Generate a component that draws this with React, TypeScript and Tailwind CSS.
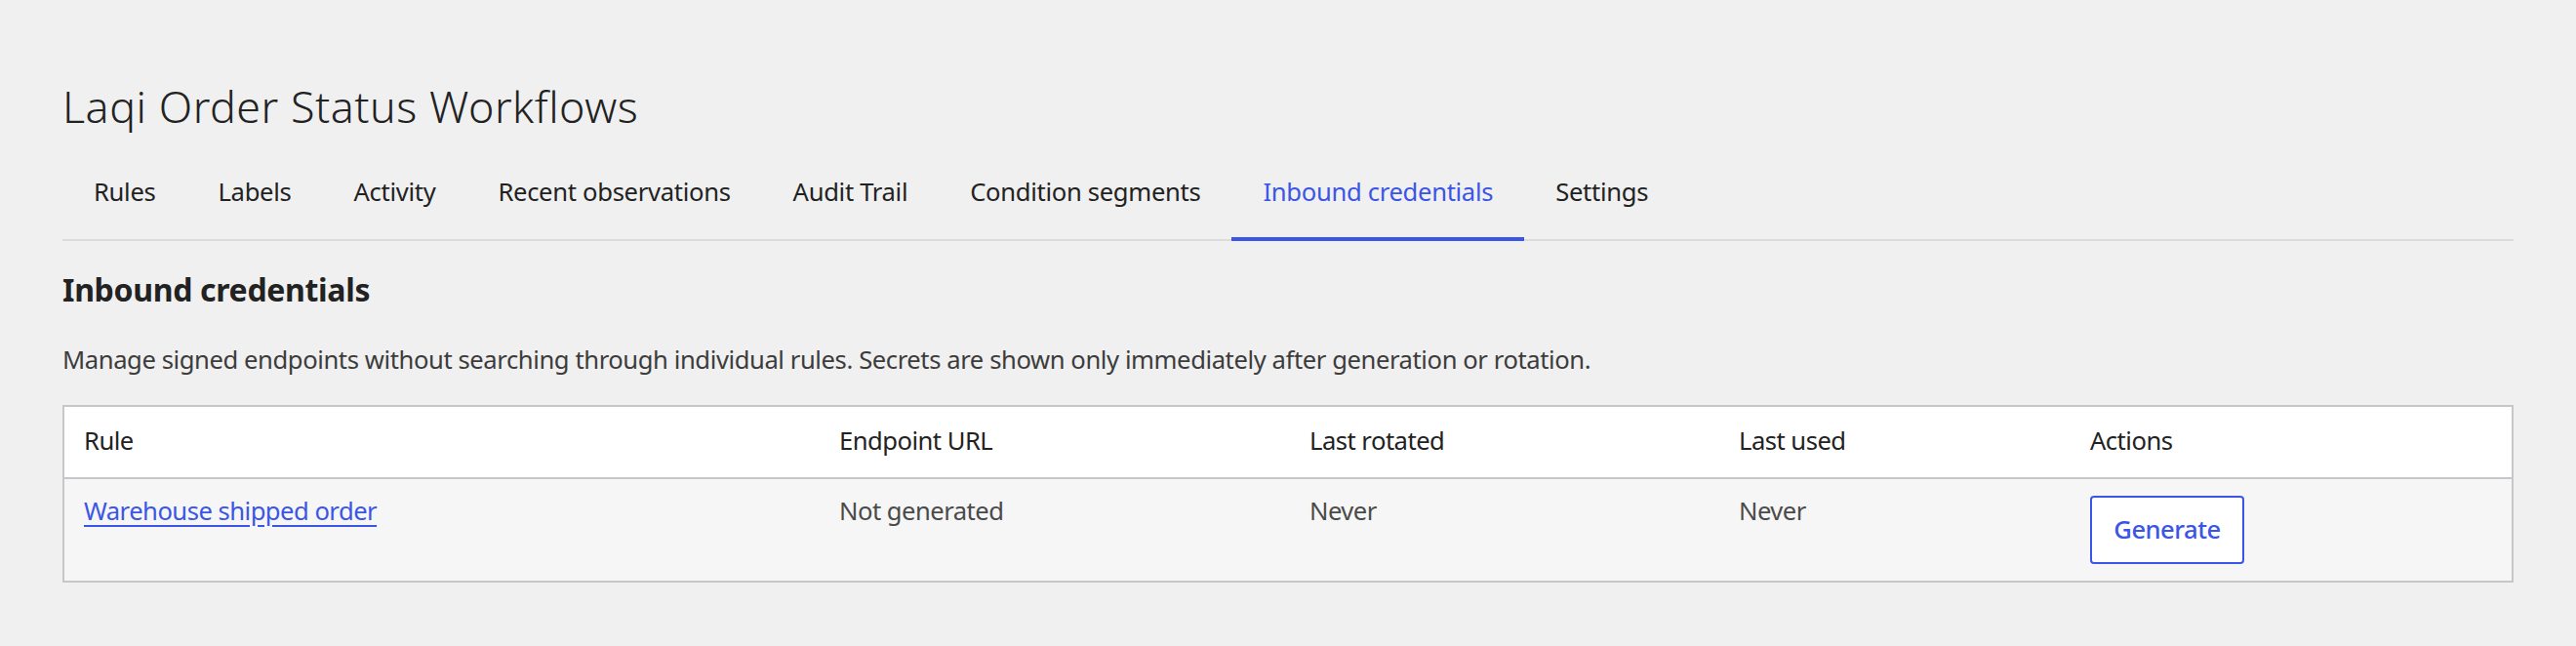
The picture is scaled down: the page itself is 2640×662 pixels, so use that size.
const tabs = [
  "Rules",
  "Labels",
  "Activity",
  "Recent observations",
  "Audit Trail",
  "Condition segments",
  "Inbound credentials",
  "Settings",
];

const columns = ["Rule", "Endpoint URL", "Last rotated", "Last used", "Actions"];

export default function App() {
  const active = "Inbound credentials";

  return (
    <div
      className="min-h-[662px] w-full bg-[#f0f0f0] px-[64px] pt-[82px] pb-10 text-[#222222]"
      style={{ fontFamily: '"Noto Sans", "Open Sans", sans-serif' }}
    >
      <h1 className="text-[44.8px] font-light leading-[54px] tracking-[0.012em]">
        Laqi Order Status Workflows
      </h1>

      {/* Tabs */}
      <nav className="mt-[26px] flex border-b-2 border-[#dcdcdc]">
        {tabs.map((t) => (
          <button
            key={t}
            className={`-mb-[2px] border-b-4 px-8 pt-[17px] pb-[28px] text-[25.6px] leading-[36px] tracking-[-0.012em] ${
              t === active
                ? "border-[#3b55e6] text-[#3b55e6]"
                : "border-transparent text-[#222222]"
            }`}
          >
            {t}
          </button>
        ))}
      </nav>

      <h2 className="mt-[30px] text-[32px] font-bold leading-[40px] tracking-[-0.01em]">
        Inbound credentials
      </h2>
      <p className="mt-[34px] text-[25.6px] leading-[36px] tracking-[-0.016em] text-[#3c3c3c]">
        Manage signed endpoints without searching through individual rules. Secrets are shown only
        immediately after generation or rotation.
      </p>

      {/* Credentials table */}
      <div className="mt-[28px] border-2 border-[#c6c7cb] text-[25.6px] leading-[36px] tracking-[-0.02em]">
        <div className="grid grid-cols-[774px_482px_440px_360px_1fr] bg-white">
          {columns.map((c) => (
            <div key={c} className="px-5 pt-[17px] pb-[19px] text-[#222222]">
              {c}
            </div>
          ))}
        </div>
        <div className="grid grid-cols-[774px_482px_440px_360px_1fr] border-t-2 border-[#c6c7cb] bg-[#f5f6f5] text-[#4a4a4a]">
          <div className="px-5 pt-[15px]">
            <a href="#" className="text-[#3b55e6] underline underline-offset-[5px]">
              Warehouse shipped order
            </a>
          </div>
          <div className="px-5 pt-[15px]">Not generated</div>
          <div className="px-5 pt-[15px]">Never</div>
          <div className="px-5 pt-[15px]">Never</div>
          <div className="px-5 pt-[17px] pb-[17px]">
            <button className="flex h-[70px] w-[158px] items-center justify-center rounded-[4px] border-2 border-[#3b55e6] bg-white text-[25.6px] font-medium text-[#3b55e6]">
              Generate
            </button>
          </div>
        </div>
      </div>
    </div>
  );
}
